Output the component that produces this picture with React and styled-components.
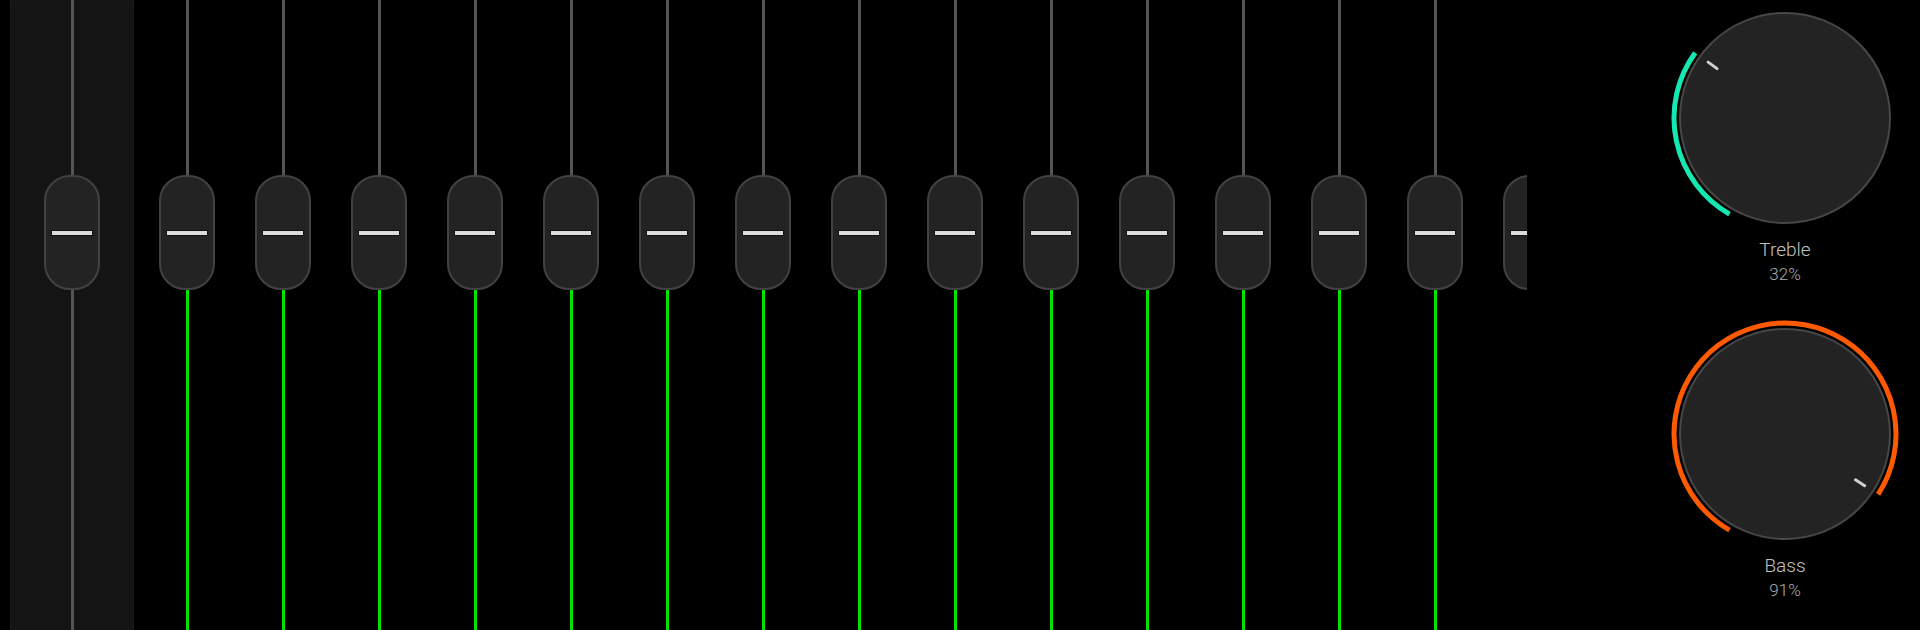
import React from "react";
import styled, { createGlobalStyle } from "styled-components";

const GlobalStyle = createGlobalStyle`
  html, body {
    margin: 0;
    padding: 0;
    background: #000;
    overflow: hidden;
  }
  body {
    font-family: Roboto, "Open Sans", "Liberation Sans", sans-serif;
  }
`;

const CHANNELS = 15;

const polar = (r, deg) => {
  const a = (deg * Math.PI) / 180;
  return [116 + r * Math.sin(a), 116 - r * Math.cos(a)];
};

const arcPath = (r, from, to) => {
  const [x1, y1] = polar(r, from);
  const [x2, y2] = polar(r, to);
  const large = to - from > 180 ? 1 : 0;
  return `M ${x1} ${y1} A ${r} ${r} 0 ${large} 1 ${x2} ${y2}`;
};

const Fader = ({ fill }) => (
  <FaderTrack>
    <Rail $color="#555" $grow={false} />
    <Cap>
      <Grip />
    </Cap>
    <Rail $color={fill} $grow />
  </FaderTrack>
);

const Knob = ({ label, value, color }) => {
  const end = -150 + 300 * (value / 100);
  const [tx1, ty1] = polar(84, end);
  const [tx2, ty2] = polar(95, end);
  return (
    <KnobGroup>
      <svg width="232" height="232" viewBox="0 0 232 232">
        <path
          d={arcPath(111, -150, end)}
          fill="none"
          stroke={color}
          strokeWidth="5"
        />
        <circle cx="116" cy="116" r="105" fill="#232323" stroke="#474747" strokeWidth="2" />
        <line
          x1={tx1}
          y1={ty1}
          x2={tx2}
          y2={ty2}
          stroke="#d0d0d0"
          strokeWidth="3"
          strokeLinecap="round"
        />
      </svg>
      <KnobLabel>{label}</KnobLabel>
      <KnobValue>{value}%</KnobValue>
    </KnobGroup>
  );
};

const App = () => {
  return (
    <>
      <GlobalStyle />
      <Console>
        <MasterStrip>
          <Fader fill="#555" />
        </MasterStrip>
        <ChannelBank>
          {Array.from({ length: CHANNELS }).map((_, i) => (
            <Channel key={i}>
              <Fader fill="#00e000" />
            </Channel>
          ))}
        </ChannelBank>
        <KnobPanel>
          <Knob label="Treble" value={32} color="#14e8b2" />
          <Knob label="Bass" value={91} color="#ff5a00" />
        </KnobPanel>
      </Console>
    </>
  );
};

//Styled components

const Console = styled.div`
  display: flex;
  height: 630px;
  padding-left: 10px;
  background: #000;
  overflow: hidden;
`;

const MasterStrip = styled.div`
  flex: 0 0 124px;
  box-sizing: border-box;
  background: #141414;
  border-left: 1px dotted #1f1f1f;
  border-right: 1px dotted #1f1f1f;
  display: flex;
  justify-content: center;
`;

const ChannelBank = styled.div`
  flex: 0 0 1388px;
  margin-left: 5px;
  display: flex;
  overflow: hidden;
`;

const Channel = styled.div`
  flex: 0 0 96px;
  display: flex;
  justify-content: center;
`;

const FaderTrack = styled.div`
  width: 56px;
  height: 100%;
  display: flex;
  flex-direction: column;
  align-items: center;
`;

const Rail = styled.div`
  width: 3px;
  background: ${(p) => p.$color};
  flex: ${(p) => (p.$grow ? "1 1 auto" : "0 0 175px")};
`;

const Cap = styled.div`
  flex: 0 0 115px;
  width: 56px;
  box-sizing: border-box;
  background: #232323;
  border: 2px solid #424242;
  border-radius: 26px;
  display: flex;
  align-items: center;
  justify-content: center;
`;

const Grip = styled.div`
  width: 40px;
  height: 4px;
  background: #dcdcdc;
  box-shadow: 0 0 0 1px #111;
`;

const KnobPanel = styled.div`
  margin-left: auto;
  margin-right: 19px;
  padding-top: 2px;
  display: flex;
  flex-direction: column;
  gap: 32px;
`;

const KnobGroup = styled.div`
  display: flex;
  flex-direction: column;
  align-items: center;
  svg {
    display: block;
  }
`;

const KnobLabel = styled.div`
  margin-top: 4px;
  font-size: 19px;
  font-weight: 300;
  line-height: 24px;
  color: #c0c0c0;
`;

const KnobValue = styled.div`
  font-size: 17px;
  font-weight: 300;
  line-height: 24px;
  color: #ababab;
`;

export default App;
